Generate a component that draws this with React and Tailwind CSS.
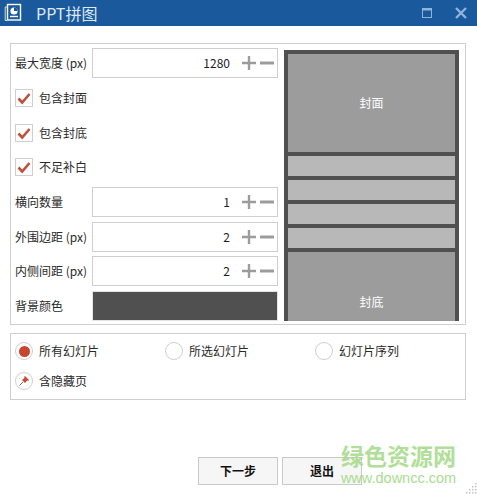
import React from "react";

const font = { fontFamily: '"Noto Sans CJK SC", sans-serif' };

function Check() {
  return (
    <span className="w-[18px] h-[18px] border border-[#cfcfcf] bg-white flex items-center justify-center shrink-0">
      <svg width="14" height="14" viewBox="0 0 14 14">
        <path d="M1.5 7.5 L5.2 11.5 L12.5 3" fill="none" stroke="#c0503c" strokeWidth="2.6" />
      </svg>
    </span>
  );
}

function CheckRow({ label, className }) {
  return (
    <div className={"flex items-center gap-[6px] h-[18px] " + className}>
      <Check />
      <span>{label}</span>
    </div>
  );
}

function NumberRow({ label, value, className = "" }) {
  return (
    <div className={"flex items-center h-[30px] " + className}>
      <span className="w-[77px] whitespace-nowrap">{label}</span>
      <div className="w-[186px] h-[30px] border border-[#cfcfcf] bg-white flex items-center justify-end pr-[2px]">
        <span className="mr-[11px] text-[#222]">{value}</span>
        <svg width="34" height="16" viewBox="0 0 34 16">
          <path d="M1 8 H15 M8 1 V15" stroke="#9c9c9c" strokeWidth="2.4" fill="none" />
          <path d="M19 8 H33" stroke="#9c9c9c" strokeWidth="3" fill="none" />
        </svg>
      </div>
    </div>
  );
}

function Radio({ on, children }) {
  return (
    <span className="w-[18px] h-[18px] rounded-full border border-[#cfcfcf] bg-white flex items-center justify-center shrink-0">
      {on && <span className="w-[11px] h-[11px] rounded-full bg-[#c8452f]" />}
      {children}
    </span>
  );
}

function RadioItem({ label, on, className }) {
  return (
    <div className={"flex items-center gap-[6px] " + className}>
      <Radio on={on} />
      <span>{label}</span>
    </div>
  );
}

function Strip() {
  return <div className="h-[20px] bg-[#b8b8b8] shrink-0" />;
}

const gripDots = [
  [10, 1], [7, 4], [10, 4], [4, 7], [7, 7], [10, 7], [1, 10], [4, 10], [7, 10], [10, 10],
];

export default function App() {
  return (
    <div style={font} className="relative w-[477px] h-[494px] bg-white overflow-hidden text-[12px] leading-[18px] text-[#2a2a2a]">
      <header className="h-[26px] bg-[#1a5a9c] flex items-center text-white">
        <svg className="ml-[4px]" width="18" height="20" viewBox="0 0 18 20">
          <rect x="3.5" y="1.5" width="13" height="15.5" fill="#1a5a9c" stroke="#fff" strokeWidth="1.4" />
          <path d="M3.5 4 H1.2 V17.5 H3" fill="none" stroke="#cfe0f0" strokeWidth="1" />
          <circle cx="10" cy="8" r="3.6" fill="#fff" />
          <path d="M10 8 V4.4 A3.6 3.6 0 0 1 13.6 8 Z" fill="#1a5a9c" />
          <path d="M6 13.5 H14" stroke="#fff" strokeWidth="1.4" />
        </svg>
        <span className="ml-[14px] text-[16px] text-[#dfe9f3]">PPT拼图</span>
        <svg className="ml-auto mr-[23px]" width="10" height="10" viewBox="0 0 10 10">
          <rect x="0.5" y="0.5" width="9" height="9" fill="none" stroke="#8fb4d9" />
          <path d="M0 1.5 H10" stroke="#8fb4d9" strokeWidth="2" />
        </svg>
        <svg className="mr-[10px]" width="12" height="12" viewBox="0 0 12 12">
          <path d="M1 1 L11 11 M11 1 L1 11" stroke="#8fb4d9" strokeWidth="2.4" />
        </svg>
      </header>

      <section className="mt-[17px] ml-[10px] w-[456px] h-[282px] border border-[#cfcfcf] pt-[4px] pl-[4px] flex">
        <div className="w-[263px] shrink-0">
          <NumberRow label="最大宽度 (px)" value="1280" />
          <CheckRow label="包含封面" className="mt-[11px]" />
          <CheckRow label="包含封底" className="mt-[17px]" />
          <CheckRow label="不足补白" className="mt-[16px]" />
          <NumberRow label="横向数量" value="1" className="mt-[11px]" />
          <NumberRow label="外围边距 (px)" value="2" className="mt-[5px]" />
          <NumberRow label="内侧间距 (px)" value="2" className="mt-[4px]" />
          <div className="flex items-center h-[30px] mt-[5px]">
            <span className="w-[77px]">背景颜色</span>
            <div className="w-[186px] h-[30px] bg-[#505050] border border-[#e4e4e4]" />
          </div>
        </div>
        <div className="ml-[6px] mt-[2px] w-[175px] h-[271px] bg-[#505050] px-[4px] pt-[4px] flex flex-col gap-[4px] overflow-hidden text-white">
          <div className="h-[98px] bg-[#9c9c9c] flex items-center justify-center shrink-0">封面</div>
          <Strip />
          <Strip />
          <Strip />
          <Strip />
          <div className="h-[69px] bg-[#9c9c9c] flex items-end justify-center pb-[10px] shrink-0">封底</div>
        </div>
      </section>

      <section className="mt-[8px] ml-[10px] w-[456px] h-[67px] border border-[#cfcfcf] pt-[8px] pl-[4px]">
        <div className="flex h-[18px]">
          <RadioItem label="所有幻灯片" on className="w-[150px]" />
          <RadioItem label="所选幻灯片" className="w-[150px]" />
          <RadioItem label="幻灯片序列" />
        </div>
        <div className="flex items-center gap-[6px] h-[18px] mt-[12px]">
          <Radio>
            <svg width="14" height="14" viewBox="0 0 14 14">
              <path d="M2.5 11.5 L6 8" stroke="#9a5a50" strokeWidth="1" />
              <path d="M5 6 L8 3.5 L10.5 6 L8 9 Z" fill="#c8452f" />
              <path d="M7.5 2.5 L11.5 6.5" stroke="#c8452f" strokeWidth="1.4" />
              <path d="M2 5 L3 4 M10 11.5 L11 10.5" stroke="#d8b8b0" strokeWidth="1" strokeDasharray="1 1" />
            </svg>
          </Radio>
          <span>含隐藏页</span>
        </div>
      </section>

      <footer className="mt-[57px] ml-[198px] flex gap-[4px] font-semibold text-[#111]">
        <button className="w-[80px] h-[28px] border border-[#c8c8c8] bg-[#f6f6f6]">下一步</button>
        <button className="w-[80px] h-[28px] border border-[#c8c8c8] bg-[#f6f6f6]">退出</button>
      </footer>

      <div className="absolute left-[336px] top-[442px] w-[125px] text-center">
        <div className="text-[23px] leading-[26px] font-bold text-[#a9dc8f] whitespace-nowrap opacity-90">绿色资源网</div>
        <div className="mt-[2px] text-[14.5px] leading-[17px] text-[#a9dc8f] whitespace-nowrap" style={{ fontFamily: '"Liberation Sans", sans-serif' }}>www.downcc.com</div>
      </div>

      <svg className="absolute right-0 bottom-0" width="12" height="12" viewBox="0 0 12 12">
        {gripDots.map(([x, y]) => (
          <rect key={x + "-" + y} x={x} y={y} width="1.5" height="1.5" fill="#c4c4c4" />
        ))}
      </svg>
    </div>
  );
}
